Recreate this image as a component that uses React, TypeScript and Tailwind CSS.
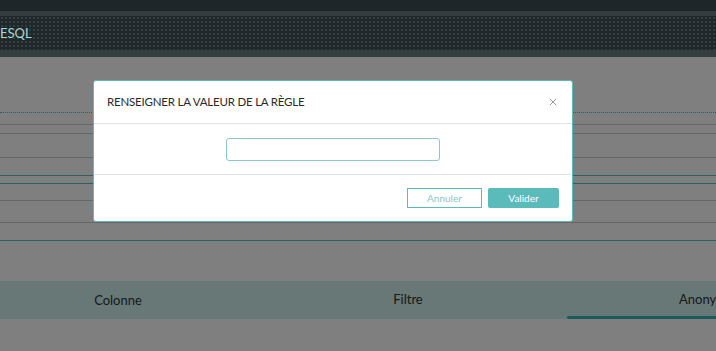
import { X } from "lucide-react";

function Line({ tone }: { tone: "gray" | "teal" }) {
  return <div className={tone === "teal" ? "h-px bg-[#56bcbc]" : "h-px bg-[#cccccc]"} />;
}

export default function App() {
  return (
    <div className="relative h-[351px] w-[716px] overflow-hidden bg-white font-['Lato',sans-serif]">
      {/* header stays above the backdrop */}
      <header className="relative z-20">
        <div className="h-[11px] bg-[#1e2629]" />
        <div className="h-[5px] bg-[#343d3f]" />
        <div className="flex h-[34px] items-center bg-[#1f2729] bg-[radial-gradient(#343e40_0.8px,transparent_0.8px)] bg-[length:4px_4px]">
          <span className="pt-[1px] text-[13px] text-[#a6d6d6]">ESQL</span>
        </div>
        <div className="h-[7px] bg-[#343d3f]" />
      </header>

      {/* page content behind the dialog */}
      <main>
        <div className="h-[55px]" />
        <div className="border-t border-dotted border-[#56bcbc]" />
        <div className="h-[11px]" />
        <Line tone="gray" />
        <div className="h-[8px]" />
        <Line tone="gray" />
        <div className="h-[23px]" />
        <Line tone="gray" />
        <div className="h-[17px]" />
        <Line tone="teal" />
        <div className="h-[7px]" />
        <Line tone="teal" />
        <div className="h-[16px]" />
        <Line tone="gray" />
        <div className="flex h-[21px] items-end">
          <div className="ml-[362px] h-[2px] w-[24px] bg-[repeating-linear-gradient(90deg,#3f9a9a_0px,#3f9a9a_1px,#cccccc_1px,#cccccc_2px)]" />
        </div>
        <Line tone="gray" />
        <div className="h-[17px]" />
        <Line tone="teal" />
        <div className="h-[40px]" />
        <nav className="flex h-[38px] bg-[#cef0ec] text-[13px] text-[#333333]">
          <div className="flex w-[236px] shrink-0 items-center justify-center pt-[2px]">Colonne</div>
          <div className="flex w-[331px] shrink-0 items-center justify-center pl-[13px]">Filtre</div>
          <div className="relative flex w-[300px] shrink-0 items-center pl-[112px]">
            Anonymisation
            <span className="absolute bottom-0 left-0 right-0 h-[3px] rounded-l-full bg-[#36b4b4]" />
          </div>
        </nav>
      </main>

      {/* backdrop */}
      <div className="absolute inset-0 z-10 bg-black/50" />

      {/* dialog */}
      <div className="absolute left-[93px] top-[80px] z-30 flex h-[142px] w-[480px] flex-col rounded-[3px] border border-[#5bbaba] bg-white">
        <div className="flex h-[43px] items-center justify-between border-b border-[#dde3e6] pl-[13px] pr-[13px]">
          <span className="text-[11.5px] tracking-[-0.2px] text-[#2a2a2a]">RENSEIGNER LA VALEUR DE LA RÈGLE</span>
          <X className="h-[12px] w-[12px] text-[#777777]" strokeWidth={1.5} />
        </div>
        <div className="flex h-[51px] items-center justify-center border-b border-[#dde3e6]">
          <input className="h-[23px] w-[214px] rounded-[3px] border border-[#8dc5d0] outline-none" />
        </div>
        <div className="flex flex-1 items-center justify-end gap-[6px] pr-[13px]">
          <button className="h-[20px] w-[75px] border border-[#5bbaba] bg-white text-[10px] text-[#8dc5c8]">Annuler</button>
          <button className="h-[20px] w-[71px] rounded-[2px] bg-[#5bbaba] text-[10px] text-white">Valider</button>
        </div>
      </div>
    </div>
  );
}
